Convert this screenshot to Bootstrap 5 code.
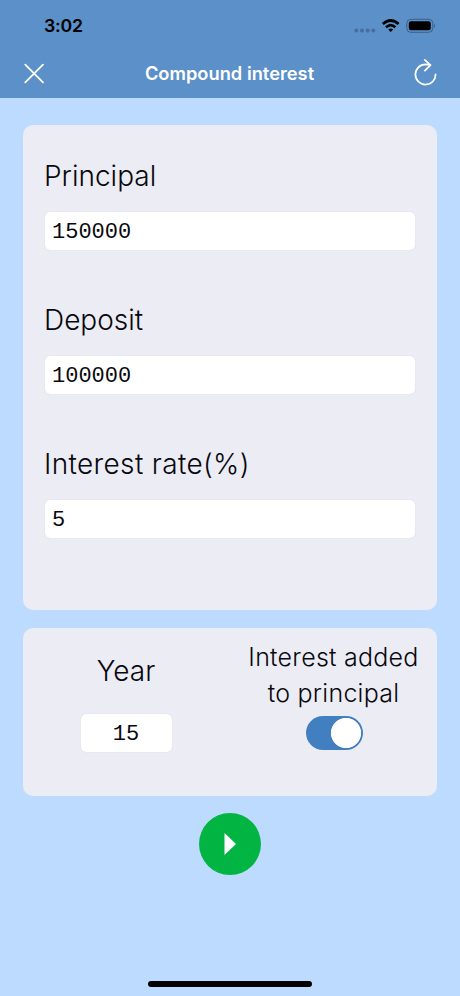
<!DOCTYPE html>
<html lang="en">
<head>
<meta charset="utf-8">
<meta name="viewport" content="width=device-width, initial-scale=1">
<title>Compound interest</title>
<link rel="stylesheet" href="https://cdn.jsdelivr.net/npm/bootstrap@5.3.0/dist/css/bootstrap.min.css">
<style>
body{background:#bddbfe;font-family:Inter,"Liberation Sans",sans-serif;color:#08080d;height:996px;overflow:hidden}
.app-head{background:#5b90c8;height:98px}
.status{height:50px;padding:2px 24px 0 44px}
.clock{font-size:17.7px;font-weight:600;color:#000;line-height:1;letter-spacing:-.2px}
.title-row{height:48px;padding:0 22px 0 23px}
.title-row h1{font-size:18.3px;font-weight:600;letter-spacing:0;line-height:1;padding-bottom:1px}
.icon-btn{line-height:0}
.panel{background:#ececf5;border-radius:10px}
.panel-main{margin:27px 23px 0 23px;height:485px;padding:33px 22px 0}
.panel-opts{margin:18px 23px 0 23px;height:168px}
.field{height:144px}
.field-label{font-size:28px;font-weight:350;line-height:36px;letter-spacing:0;margin:0 0 18px -1px;white-space:nowrap}
.label-wide{letter-spacing:.35px}
.entry{font-family:"Liberation Mono",monospace;font-size:22px;line-height:1;height:38px;padding:3px 8px 0 7px;border:0;border-radius:5px;color:#08080d;background:#fff;box-shadow:0 0 1px #c9c9d5}
.year-col{width:207px;padding-top:25px}
.year-col .field-label{margin-bottom:25px}
.year-entry{width:91px}
.switch-col{width:207px;padding-top:11px}
.switch-label{font-size:25px;font-weight:350;line-height:36px;letter-spacing:.25px;white-space:nowrap}
.toggle.form-check-input{width:57px;height:34px;margin:5px 0 0 2px;border:0;border-radius:17px;background:#427fc0 radial-gradient(circle at 40px 17px,#fff 14.7px,transparent 15.5px)}
.go{width:62px;height:62px;background:#02b441;margin-top:17px}
.home-bar{width:164px;height:6px;margin-bottom:9px;background:#000}
</style>
<script src="https://cdn.jsdelivr.net/npm/bootstrap@5.3.0/dist/js/bootstrap.bundle.min.js"></script>
</head>
<body class="d-flex flex-column">
<header class="app-head">
  <div class="status d-flex align-items-center justify-content-between">
    <span class="clock">3:02</span>
    <svg width="84" height="20" viewBox="352 15.5 84 20">
      <g fill="#456f9f"><circle cx="356.3" cy="30" r="2"/><circle cx="362" cy="30" r="2"/><circle cx="367.7" cy="30" r="2"/><circle cx="373.3" cy="30" r="2"/></g>
      <g fill="none" stroke="#000" stroke-width="2.7"><path d="M382.8 23.5Q390.7 16.5 398.6 23.5"/><path d="M386 26.8Q390.7 22.5 395.4 26.8"/></g>
      <path d="M388.2 29Q390.7 26.9 393.2 29L390.7 31.5Z" fill="#000"/>
      <rect x="406.8" y="18.8" width="26" height="13" rx="4" fill="none" stroke="#3d5f87"/>
      <rect x="408.8" y="20.8" width="22" height="9" rx="2.2" fill="#000"/>
      <path d="M434 23.2Q436 25.3 434 27.4Z" fill="#3d5f87"/>
    </svg>
  </div>
  <div class="title-row d-flex align-items-center justify-content-between text-white">
    <button type="button" class="icon-btn btn p-0 border-0 text-white" aria-label="Close">
      <svg width="22" height="22" viewBox="0 0 22 22" fill="none" stroke="currentColor" stroke-width="1.8" stroke-linecap="round"><path d="M2.3 1.6L20 19.3M20 1.6L2.3 19.3"/></svg>
    </button>
    <h1 class="mb-0">Compound interest</h1>
    <button type="button" class="icon-btn btn p-0 border-0 text-white" aria-label="Reset">
      <svg width="24" height="30" viewBox="0 0 24 30" fill="none" stroke="currentColor" stroke-width="1.7" stroke-linecap="round" stroke-linejoin="round"><path d="M21.6 15.3A10.1 10.1 0 1 1 11.5 5.4L16.4 5.9M10.8 .9L16.5 6.1L10.9 11.7"/></svg>
    </button>
  </div>
</header>
<main class="flex-grow-1 d-flex flex-column">
  <section class="panel panel-main">
    <div class="field"><label class="field-label d-block" for="principal">Principal</label><input id="principal" class="entry form-control" value="150000"></div>
    <div class="field"><label class="field-label d-block" for="deposit">Deposit</label><input id="deposit" class="entry form-control" value="100000"></div>
    <div class="field"><label class="field-label label-wide d-block" for="rate">Interest rate(%)</label><input id="rate" class="entry form-control" value="5"></div>
  </section>
  <section class="panel panel-opts d-flex">
    <div class="year-col d-flex flex-column align-items-center">
      <label class="field-label" for="year">Year</label>
      <input id="year" class="entry year-entry form-control text-center" value="15">
    </div>
    <div class="switch-col d-flex flex-column align-items-center">
      <label class="switch-label text-center" for="compound">Interest added<br>to principal</label>
      <input id="compound" class="toggle form-check-input" type="checkbox" role="switch" checked>
    </div>
  </section>
  <button type="button" class="go btn rounded-circle border-0 p-0 align-self-center d-flex align-items-center justify-content-center" aria-label="Calculate">
    <svg width="12" height="22" viewBox="0 0 12 22"><path d="M.5 0L12 11L.5 22Z" fill="#fff"/></svg>
  </button>
</main>
<div class="home-bar rounded-pill align-self-center"></div>
</body>
</html>
